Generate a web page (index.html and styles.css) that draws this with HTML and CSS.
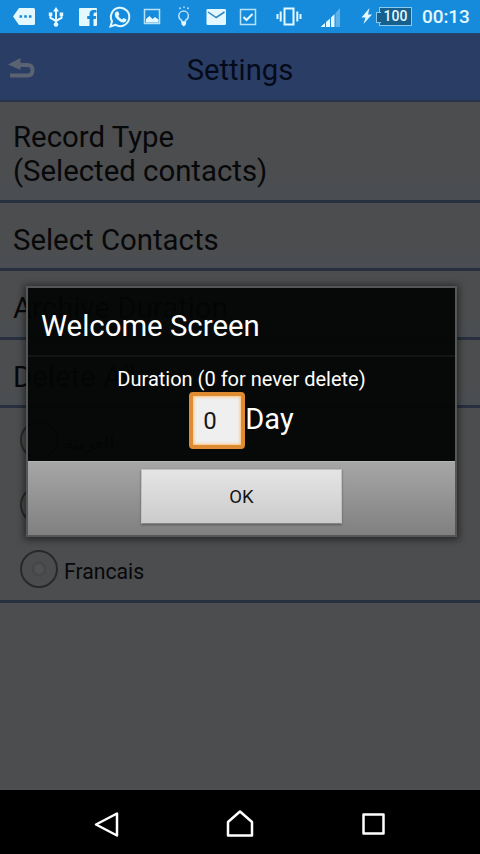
FILE: index.html
```html
<!DOCTYPE html>
<html lang="en">
<head>
<meta charset="utf-8">
<title>Settings</title>
<link rel="stylesheet" href="styles.css">
</head>
<body>
<div class="screen">
  <div class="status">
    <div class="notifications">
      <svg viewBox="0 0 32 33"><path fill="currentColor" fill-rule="evenodd" d="M11 8h14.500q1.500 0 1.500 1.500v14q0 1.500-1.500 1.500H11L5 16.500zM11.500 15.200v2.600h2.600v-2.600zM16.200 15.200v2.600h2.600v-2.600zM20.900 15.200v2.600h2.600v-2.600z"/></svg>
      <svg viewBox="0 0 32 33"><path class="line" d="M16 10v14M10.500 14v4l5.500 3 5.500-3v-4"/><path fill="currentColor" d="M16 7l3 4.500h-6zM8.800 12.500h3.500V16H8.800zM19.700 12.500h3.500V16h-3.500z"/><circle cx="16" cy="24.500" r="2.300" fill="currentColor"/></svg>
      <svg viewBox="0 0 32 33"><path fill="currentColor" d="M8 8h16q1 0 1 1v16q0 1-1 1h-2.500v-7h2.300l.4-3h-2.700v-2q0-1.500 1.500-1.500h1.500V10h-3q-4 0-4 4v2h-2.300v3h2.300v7H8q-1 0-1-1V9q0-1 1-1z"/></svg>
      <svg viewBox="0 0 32 33"><path class="line" d="M6.500 26.500l1.500-5.200a9.200 9.200 0 1 1 3.500 3.600z"/><path fill="currentColor" d="M12.700 11.500h1.500l1.200 3-1.100 1.400q1.300 2.500 3.800 3.500l1.300-1.500 3 1.400q.1 3-3 3.200-3.400-.2-6.200-3.200-2.500-2.600-2.500-5 .1-2 2-2.800z"/></svg>
      <svg viewBox="0 0 32 33"><path class="thin" d="M8.500 9.500h15v14h-15z"/><path fill="currentColor" d="M10 22.500V19l3.500-3 3 3 2.500-2 3.500 2.500v3z"/></svg>
      <svg viewBox="0 0 32 33"><path class="thin" d="M13.800 22v-1.500q-3-1.500-3-4.700a4.800 4.800 0 0 1 9.600 0q0 3.200-3 4.700V22zM12.500 9l-1-1.500M16 8V6.500M19.500 9l1-1.500"/><path fill="currentColor" d="M13.500 21.500h4.500v3l-2.200 2-2.300-2z"/></svg>
      <svg viewBox="0 0 32 33"><rect x="6.500" y="9" width="19.500" height="16" rx="1.300" fill="currentColor"/><path class="fold" d="M8 12l8.200 5.500L24.500 12"/></svg>
      <svg viewBox="0 0 32 33"><path class="thin" d="M8.500 9.500h15v15h-15z"/><path class="tick" d="M11.500 17l3 3 6-6"/></svg>
    </div>
    <div class="system">
      <svg class="vibrate" viewBox="0 0 26 33"><path class="line" d="M8.500 8.500h9v16h-9z"/><path class="line" d="M4.700 11.500v10M21.300 11.500v10M1.500 14v5M24.500 14v5"/></svg>
      <svg class="signal" viewBox="0 0 22 33"><path fill="currentColor" d="M1 26.500l4-3.500v4H1zM6 22l4-3.500V27H6zM11 17.500l3.500-3.500v13H11z"/><path fill="#5fb0e8" d="M15.500 13L20 8v19h-4.500z"/></svg>
      <svg class="bolt" viewBox="0 0 12 33"><path fill="currentColor" d="M8.500 8L.5 17.500h4L2.500 24l8.500-9.500H7z"/></svg>
      <span class="battery">100</span>
      <span class="clock">00:13</span>
    </div>
  </div>

  <div class="app">
    <header class="header">
      <svg class="back" viewBox="0 0 30 24"><path class="arrow" d="M12 8h7.500q5 0 5 5.200t-5 5.300H2"/><path fill="#5b6272" d="M0 7.500L12.500 1v12z"/></svg>
      <h1>Settings</h1>
    </header>
    <div class="row tall">Record Type<br>(Selected contacts)</div>
    <div class="row">Select Contacts</div>
    <div class="row">Archive Duration</div>
    <div class="row">Delete All</div>
    <div class="languages">
      <div class="option"><span class="radio"></span><span class="arabic" dir="rtl" lang="ar">العربية</span></div>
      <div class="option"><span class="radio"></span>English</div>
      <div class="option"><span class="radio"></span>Francais</div>
    </div>
  </div>

  <nav class="nav">
    <svg viewBox="0 0 32 32"><path d="M26 5.500v22L5 16.500z"/></svg>
    <svg viewBox="0 0 32 32"><path d="M16 3.500l12 10.500V27.500H4V14z"/></svg>
    <svg viewBox="0 0 32 32"><path d="M6.500 6.500h20v19h-20z"/></svg>
  </nav>

  <section class="dialog">
    <h2>Welcome Screen</h2>
    <div class="content">
      <p>Duration (0 for never delete)</p>
      <div class="amount"><span class="field">0</span><span class="unit">Day</span></div>
    </div>
    <footer><button>OK</button></footer>
  </section>
</div>
</body>
</html>
```
FILE: styles.css
```css
* { box-sizing: border-box; }
body { margin: 0; background: #000; font-family: Roboto, "Noto Sans", sans-serif; }
h1, h2, p { margin: 0; font-weight: 400; }
.screen { position: relative; width: 480px; height: 854px; display: flex; flex-direction: column; overflow: hidden; }

.status { height: 33px; display: flex; background: #178bdb; color: #e3f8ff; flex: none; }
.notifications { display: flex; padding-left: 8px; }
.notifications svg { width: 32px; height: 33px; }
.line { fill: none; stroke: currentColor; stroke-width: 2; }
.thin { fill: none; stroke: #b5e2f8; stroke-width: 1.5; }
.tick { fill: none; stroke: currentColor; stroke-width: 2; }
.fold { fill: none; stroke: #3288bd; stroke-width: 1.5; }
.system { display: flex; align-items: center; padding-left: 12px; }
.system svg { height: 33px; }
.vibrate { width: 26px; }
.signal { width: 22px; margin-left: 18px; }
.bolt { width: 12px; margin-left: 19px; }
.battery { position: relative; width: 33px; height: 19px; margin-left: 6px; border: 1px solid #8bc9ef; background: #17608e; font-size: 14px; font-weight: 500; line-height: 17px; text-align: center; }
.battery::before { content: ""; position: absolute; left: -4px; top: 4px; width: 4px; height: 9px; border: 1px solid #8bc9ef; border-right: 0; background: #17608e; }
.clock { margin-left: 10px; font-size: 19px; line-height: 33px; font-weight: 500; letter-spacing: -.1px; white-space: nowrap; }

.app { flex: 1; background: #4c4d4e; color: #07080a; }
.header { height: 69px; display: grid; grid-template-columns: 48px 1fr 48px; align-items: center; background: #293d65; border-top: 1px solid #23466f; border-bottom: 2px solid #26334b; }
.back { width: 30px; height: 24px; margin: 4px 0 0 8px; }
.arrow { fill: none; stroke: #5b6272; stroke-width: 4; }
.header h1 { font-size: 29.200px; line-height: 34px; padding-top: 5px; color: #050a19; text-align: center; }
.row { height: 68.500px; padding: 20px 13px 0; font-size: 29.350px; line-height: 34px; border-bottom: 3px solid #28303f; background: linear-gradient(#4c4d4e 65%, #4a4e53); }
.row.tall { height: 100.500px; padding-top: 18px; }
.languages { height: 195px; padding: 0 20px; border-bottom: 3px solid #28303f; font-size: 21.200px; }
.option { height: 64.500px; display: flex; align-items: center; padding-top: 4px; }
.radio { width: 38px; height: 38px; margin: -4px 6px 0 0; border: 2px solid #27292a; border-radius: 50%; background: radial-gradient(circle, #505152 0 4px, #434445 6px, #4b4c4d 8px); }
.arabic { font-family: "DejaVu Sans", sans-serif; font-size: 18.500px; }

.nav { height: 64px; flex: none; display: flex; justify-content: center; align-items: center; gap: 101px; background: #000; padding-top: 4px; }
.nav svg { width: 32px; height: 32px; fill: none; stroke: #fff; stroke-width: 2.500; stroke-linejoin: round; }

.dialog { position: absolute; left: 26px; top: 286px; width: 431px; height: 251px; border: 2px solid #555656; box-shadow: 0 1px 7px 2px rgba(0,0,0,.48); background: rgba(3,5,4,.94); color: #fff; }
.dialog h2 { height: 69px; padding-left: 13px; font-size: 29.350px; line-height: 76px; border-bottom: 2px solid #131514; }
.content { height: 104px; text-align: center; }
.content p { padding-top: 9px; font-size: 20px; line-height: 26px; }
.amount { display: flex; align-items: flex-start; justify-content: center; }
.field { width: 56px; height: 57px; padding-left: 10px; border: 4px solid #df8b32; border-radius: 4px; background: #efefef; box-shadow: inset 0 0 3px 1px #ffc279; color: #171717; font-size: 24px; line-height: 51px; text-align: left; }
.unit { font-size: 29px; line-height: 54px; }
.dialog footer { height: 74px; padding: 7px 0; display: flex; justify-content: center; border-top: 1px solid #b4b4b4; background: linear-gradient(#a6a6a6, #808080); }
.dialog button { width: 201px; height: 55px; padding: 0; border: 1px solid #c1c1c1; border-bottom-color: #858585; background: linear-gradient(#e5e5e5, #cbcbcb); box-shadow: 0 1px 2px #5a5a5a; color: #151515; font: 18.500px Roboto, sans-serif; }
```
